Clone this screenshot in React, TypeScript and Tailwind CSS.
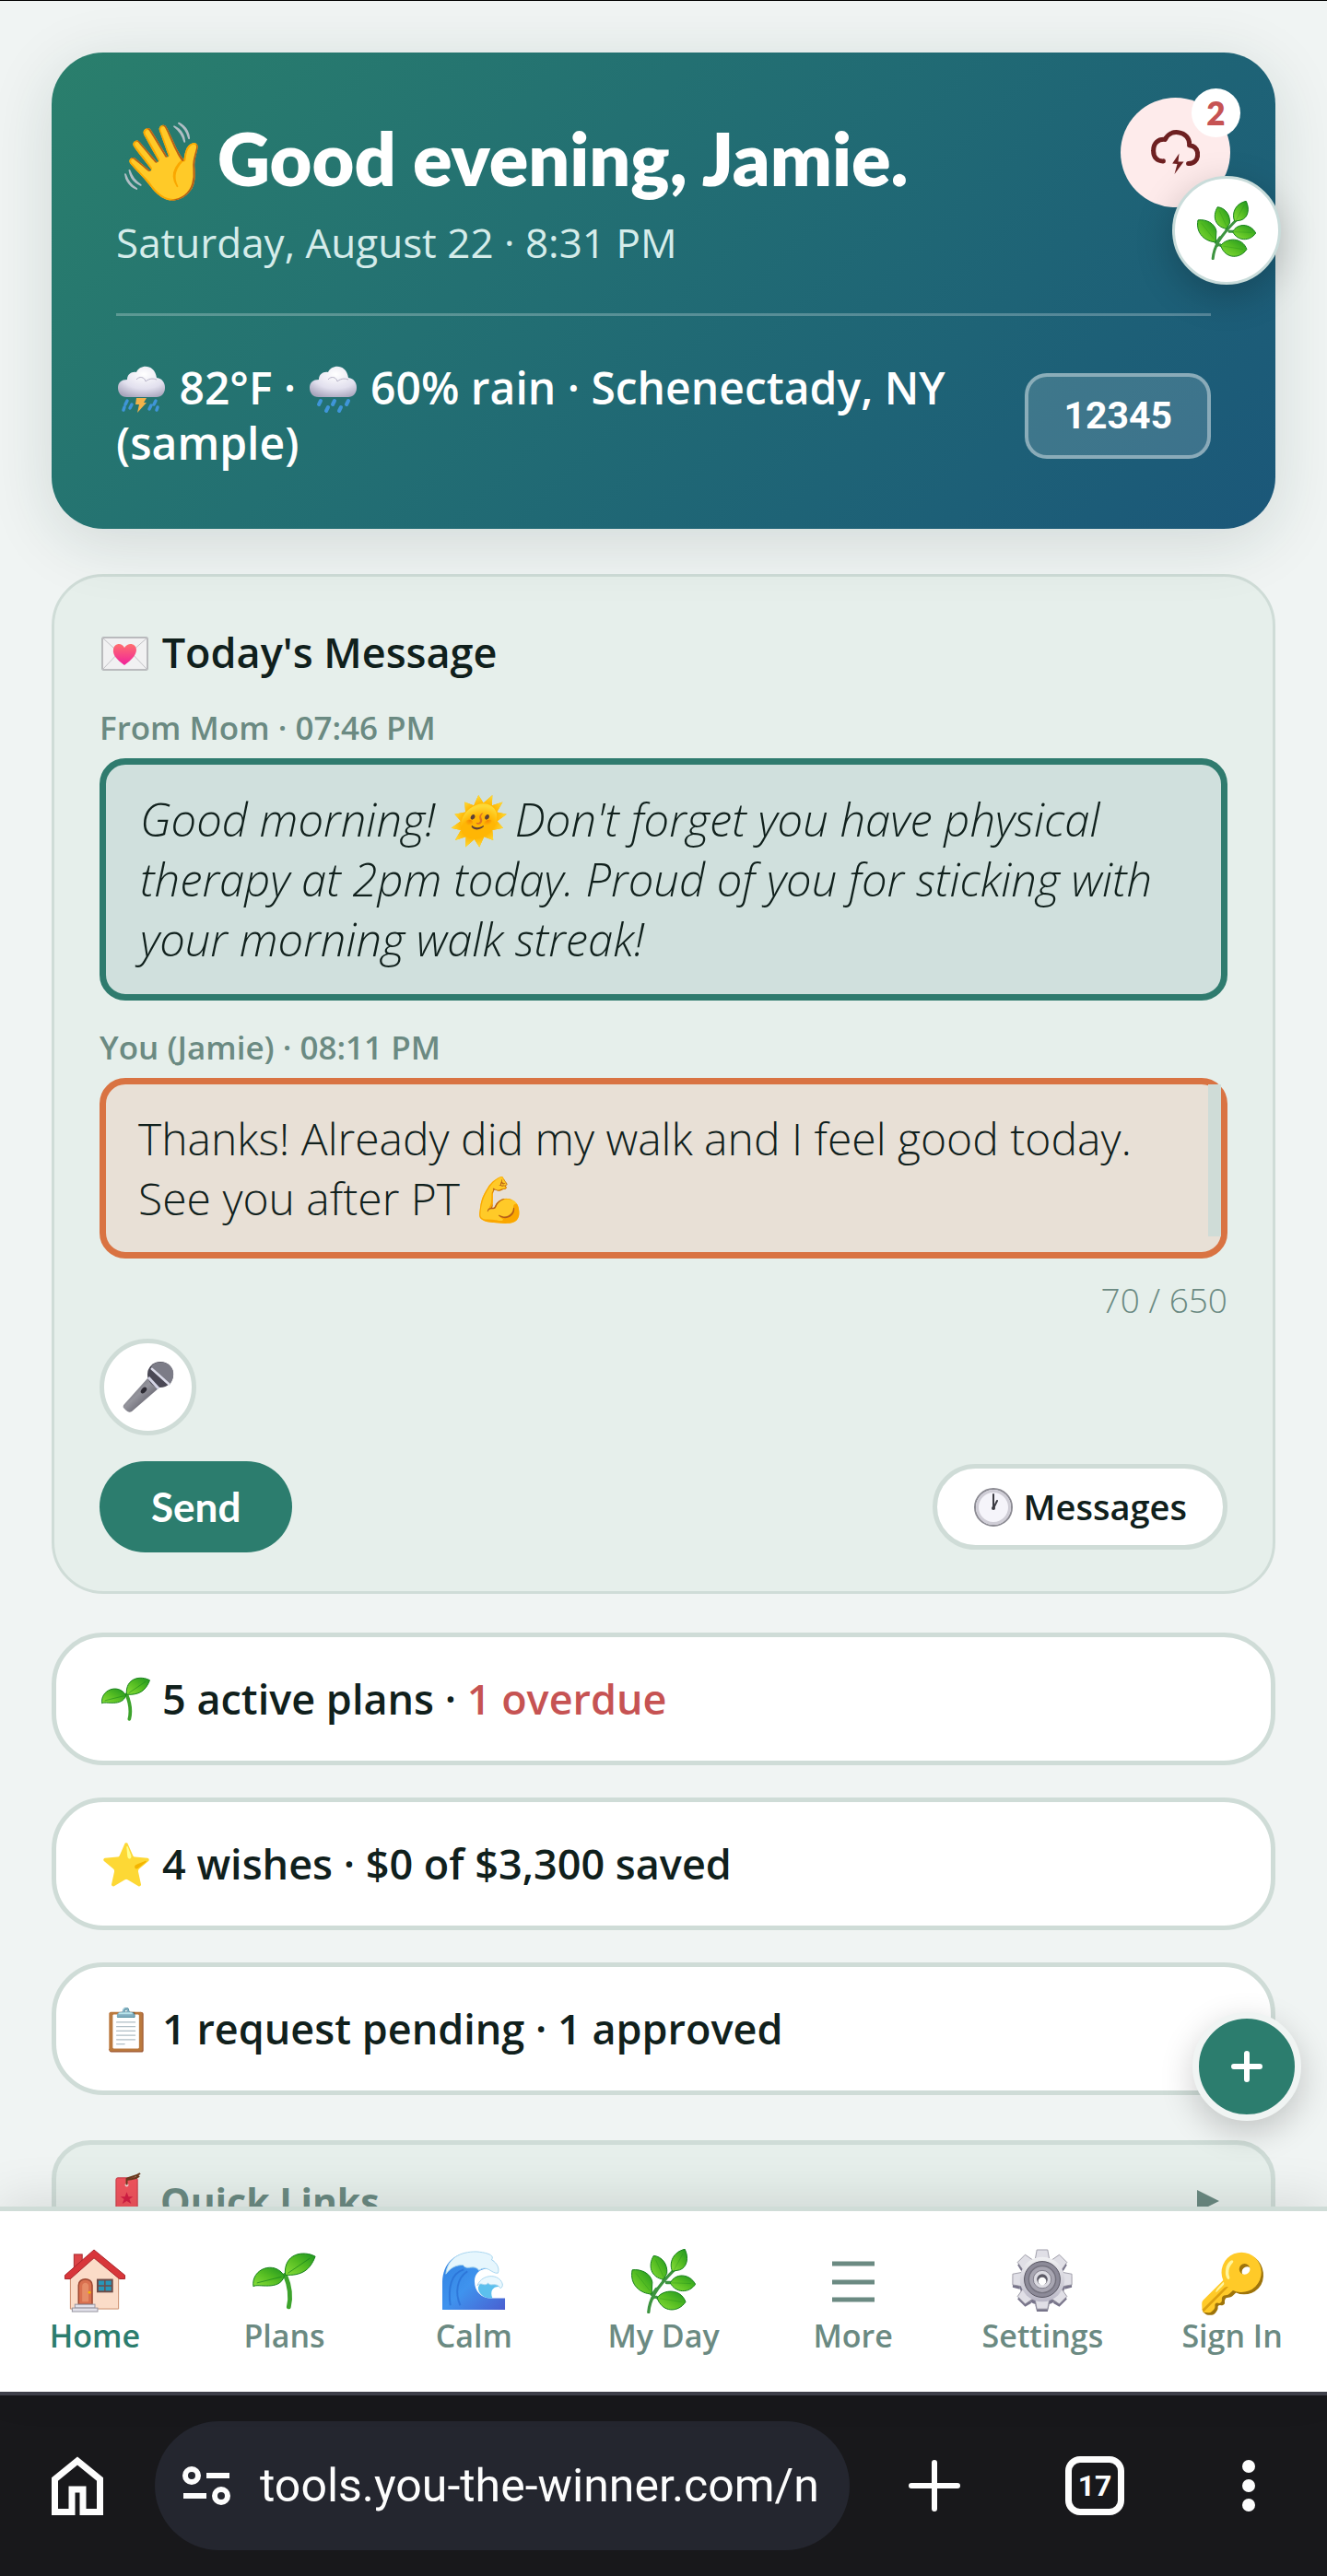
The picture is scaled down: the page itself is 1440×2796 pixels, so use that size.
import React, { useState } from 'react';

type IconProps = { className?: string };

function Leaf({ d }: { d: string }) {
  return <path d={d} fill="url(#leaf)" stroke="#15801b" strokeWidth="1" strokeLinejoin="round" vectorEffect="non-scaling-stroke" />;
}

// shared gradients, referenced by id from every icon
function Defs() {
  return (
    <svg className="absolute h-0 w-0" aria-hidden="true">
      <defs>
        <linearGradient id="leaf" x1="0" y1="1" x2="1" y2="0">
          <stop offset="0" stopColor="#8ade3a" />
          <stop offset="0.5" stopColor="#55bd22" />
          <stop offset="1" stopColor="#1d9420" />
        </linearGradient>
        <radialGradient id="cloud" cx="0.55" cy="0.25" r="0.8">
          <stop offset="0" stopColor="#ffffff" />
          <stop offset="0.6" stopColor="#e2e0ee" />
          <stop offset="1" stopColor="#a9a6bd" />
        </radialGradient>
        <linearGradient id="sea" x1="0" y1="0" x2="1" y2="1">
          <stop offset="0" stopColor="#2f7fe0" />
          <stop offset="0.5" stopColor="#3f93ee" />
          <stop offset="1" stopColor="#4a5fd0" />
        </linearGradient>
        <linearGradient id="metal" x1="0" y1="0" x2="0" y2="1">
          <stop offset="0" stopColor="#f1f1f3" />
          <stop offset="1" stopColor="#b9b7c6" />
        </linearGradient>
        <linearGradient id="mic" x1="0" y1="0" x2="1" y2="1">
          <stop offset="0" stopColor="#5c5c66" />
          <stop offset="0.45" stopColor="#94949c" />
          <stop offset="1" stopColor="#3c3948" />
        </linearGradient>
        <linearGradient id="heart" x1="0" y1="0" x2="0" y2="1">
          <stop offset="0" stopColor="#ff6f6f" />
          <stop offset="1" stopColor="#f0219b" />
        </linearGradient>
      </defs>
    </svg>
  );
}

function HerbIcon({ className }: IconProps) {
  return (
    <svg viewBox="0 0 190 190" className={className} aria-hidden="true">
      <path d="M51 186C54 150 70 118 128 60M60 134C64 132 70 124 74 118M97 88L94 96M115 99H104M77 144C72 140 66 142 62 146" fill="none" stroke="#3d9440" strokeWidth="9" strokeLinecap="round" />
      <Leaf d="M3 62C28 58 58 72 62 98L60 133C28 132-6 106 3 62Z" />
      <Leaf d="M66 20C90 22 108 45 105 72L95 90C58 84 48 50 66 20Z" />
      <Leaf d="M158 1C170 25 165 55 142 62L121 66C110 40 124 8 158 1Z" />
      <Leaf d="M115 100C130 70 172 72 189 104C170 132 130 130 115 100Z" />
      <Leaf d="M76 144C95 118 146 116 160 156C140 187 92 190 76 144Z" />
      <path d="M14 72L54 122M72 32L96 84M152 14L126 62M120 100L176 102M84 146L148 156" fill="none" stroke="#15801b" strokeWidth="2" opacity="0.4" />
    </svg>
  );
}

function SproutIcon({ className }: IconProps) {
  return (
    <svg viewBox="-1 -1 73 66" className={className} aria-hidden="true">
      <path d="M36 25C41 37 43 49 40 61" fill="none" stroke="#3da32c" strokeWidth="5" strokeLinecap="round" />
      <Leaf d="M70 4C57-3 34 0 36 25C54 26 64 20 70 4Z" />
      <Leaf d="M35 26C24 8-3 18 0 38C4 34 30 44 35 26Z" />
      <path d="M64 6L39 23M4 34L32 27" stroke="#15801b" strokeWidth="1" opacity="0.7" />
    </svg>
  );
}

function CloudIcon({ className, storm }: IconProps & { storm?: boolean }) {
  return (
    <svg viewBox="0 0 52 52" className={className} aria-hidden="true">
      <path d="M10 34C3 34 0 29 0 24C0 18 4 15 10 15C10 9 15 6 20 7C24-2 40-2 42 13C48 14 51 18 51 24C51 30 47 34 42 34Z" fill="url(#cloud)" />
      <path d="M20 15C23 11 29 12 30 17C35 13 39 14 42 15" fill="none" stroke="#b4b1c6" strokeWidth="1" />
      {storm ? (
        <>
          <path d="M20 35H31L28 40H31L21 51L23 42H19Z" fill="#f2b24a" />
          <path d="M10 38l-2 4M15 42l-2 4M7 45l-1 3M41 38l-2 4M36 43l-2 4M43 45l-1 3" stroke="#3f95d9" strokeWidth="3.5" strokeLinecap="round" />
        </>
      ) : (
        <path d="M12 38l-2 4M27 38l-2 4M42 38l-2 4M20 45l-2 4M34 45l-2 4" stroke="#3f95d9" strokeWidth="4" strokeLinecap="round" />
      )}
    </svg>
  );
}

function AlertCloudIcon({ className }: IconProps) {
  return (
    <svg viewBox="0 0 158 144" className={className} aria-hidden="true">
      <path d="M40 101C20 102 7 88 8 66C8 43 23 29 46 31C54 12 72 6 88 8C112 11 126 29 124 50C143 52 151 64 151 80C151 97 139 109 121 109" fill="none" stroke="#6e2021" strokeWidth="15" strokeLinecap="round" strokeLinejoin="round" />
      <path d="M91 76L69 109L85 110L76 143L106 103L88 103Z" fill="#6e2021" />
    </svg>
  );
}

function EnvelopeIcon({ className }: IconProps) {
  return (
    <svg viewBox="0 0 56 52" className={className} aria-hidden="true">
      <rect x="3" y="9" width="49" height="35" rx="1" fill="#f1f1f2" stroke="#a9a9ad" strokeWidth="1.500" />
      <path d="M3 44L22 24M52 44L33 24M3 9L27 31L52 9" fill="none" stroke="#c2c2c6" strokeWidth="1" />
      <path d="M27 39C19 33 14 28 15 22C16 15 24 14 27 20C31 14 39 15 40 22C40 28 35 33 27 39Z" fill="url(#heart)" />
    </svg>
  );
}

function MicIcon({ className }: IconProps) {
  return (
    <svg viewBox="0 0 56 56" className={className} aria-hidden="true">
      <path d="M28 17L40 28L10 54Q7 56 4 53L1 50Q0 48 2 46Z" fill="url(#mic)" />
      <circle cx="41" cy="14" r="14" fill="#4a4855" />
      <path d="M31 5C36-1 48-1 53 6C57 12 55 20 51 25Z" fill="#7c7c87" />
      <path d="M31 7L51 25" stroke="#dcdcea" strokeWidth="2.500" />
      <path d="M28 17L39 29" stroke="#d3d3e4" strokeWidth="3" />
      <ellipse cx="23" cy="31" rx="2.5" ry="4" transform="rotate(40 23 31)" fill="#2c2a33" />
    </svg>
  );
}

function ClockIcon({ className }: IconProps) {
  return (
    <svg viewBox="0 0 44 44" className={className} aria-hidden="true">
      <circle cx="22" cy="22" r="20" fill="#f5f4fa" stroke="#8b8a92" strokeWidth="2" />
      <circle cx="22" cy="22" r="17.500" fill="none" stroke="#cfcdd6" strokeWidth="3" />
      <path d="M22 23V8M22 23L26 15" stroke="#3b3b42" strokeWidth="2" strokeLinecap="round" />
      <circle cx="22" cy="23" r="2" fill="#3b3b42" />
    </svg>
  );
}

function BookmarkIcon({ className }: IconProps) {
  return (
    <svg viewBox="0 0 32 64" className={className} aria-hidden="true">
      <path d="M3 8Q3 6 5 6H25Q27 6 27 8V62L15 54L3 62Z" fill="#f0535d" stroke="#c43b45" strokeWidth="1" />
      <path d="M15 22l2 5h5l-4 3 2 5-5-3-5 3 2-5-4-3h5z" fill="#d41f45" />
      <circle cx="15" cy="14" r="2" fill="#f7d5d5" />
      <path d="M15 14V7C20 4 25 5 30 1M16 8C22 7 24 8 29 4" fill="none" stroke="#6b3a1e" strokeWidth="2" />
    </svg>
  );
}

function HouseIcon({ className }: IconProps) {
  return (
    <svg viewBox="-1 -2 70 71" className={className} aria-hidden="true">
      <rect x="11" y="4" width="9" height="20" fill="#dd4548" stroke="#a8292d" strokeWidth="1" />
      <path d="M7 30L33 6L60 30V64H7Z" fill="#fbdcc8" stroke="#c98a6a" strokeWidth="1" />
      <path d="M1 27L33-1L67 27V31H61L33 8L7 31H1Z" fill="#d8363a" stroke="#a8242a" strokeWidth="1" />
      <path d="M16 59V38C16 29 31 29 31 38V59Z" fill="#d9704f" stroke="#9c4630" strokeWidth="1.500" />
      <path d="M20 56V39C20 34 27 34 27 39V56Z" fill="#e68d68" />
      <circle cx="28" cy="46" r="1.500" fill="#f5b800" />
      <rect x="37" y="32" width="16" height="13" fill="#2796b8" stroke="#6f4b47" strokeWidth="2" />
      <path d="M45 32V45M37 38.500H53" stroke="#6f4b47" strokeWidth="1.500" />
      <rect x="12" y="59" width="22" height="4" fill="#e2e1ea" stroke="#96949f" strokeWidth="1" />
      <rect x="9" y="63" width="28" height="4" fill="#e2e1ea" stroke="#96949f" strokeWidth="1" />
    </svg>
  );
}

function WaveIcon({ className }: IconProps) {
  return (
    <svg viewBox="-1 -1 72 68" className={className} aria-hidden="true">
      <path d="M0 65V34C1 12 14 1 34 1C50 2 62 10 62 23C50 15 36 20 36 33C36 45 44 52 54 52H70V65Z" fill="url(#sea)" />
      <path d="M9 60C6 40 10 24 24 20M20 60C14 46 16 30 28 22" fill="none" stroke="#2468cf" strokeWidth="2" opacity="0.6" />
      <path d="M4 25C6 7 20 0 38 0C50 1 59 4 55 9C62 13 64 20 62 24C55 25 50 14 41 21C35 13 28 22 23 15C16 15 10 17 4 25Z" fill="#e6f6fd" stroke="#a8d6ee" strokeWidth="1" />
      <path d="M40 40C45 27 60 26 67 40C59 37 52 42 56 52C48 53 40 48 40 40Z" fill="#5cc0ee" />
      <path d="M39 38C43 27 58 24 65 32C68 36 68 39 65 41C60 33 54 40 51 35C47 40 44 33 39 38Z" fill="#eaf8fe" stroke="#a8d6ee" strokeWidth="1" />
    </svg>
  );
}

function GearIcon({ className }: IconProps) {
  const teeth = [0, 45, 90, 135, 180, 225, 270, 315];
  return (
    <svg viewBox="0 0 68 72" className={className} aria-hidden="true">
      <g fill="#77748a">
        {teeth.map((a) => <path key={a} d="M26 12L28 4H40L42 12Z" transform={`rotate(${a} 34 37)`} />)}
        <circle cx="34" cy="37" r="26" />
      </g>
      <g fill="url(#metal)" stroke="#8e8c99" strokeWidth="0.800">
        {teeth.map((a) => <path key={a} d="M26 12L28 1H40L42 12Z" transform={`rotate(${a} 34 34)`} fill="#e0dfe6" />)}
        <circle cx="34" cy="34" r="25" stroke="none" />
      </g>
      <circle cx="34" cy="34" r="20" fill="#8c8a98" stroke="#55535f" strokeWidth="1" />
      <circle cx="34" cy="34" r="15" fill="#a8a6b2" stroke="#75737f" strokeWidth="1.500" />
      <circle cx="34" cy="34" r="10" fill="#dcdbe2" stroke="#7f7d89" strokeWidth="1" />
      <circle cx="34" cy="34" r="6" fill="#5d5b67" />
      <circle cx="34" cy="36" r="4.500" fill="#ffffff" />
    </svg>
  );
}

function MenuIcon({ className }: IconProps) {
  return (
    <svg viewBox="0 0 70 70" className={className} aria-hidden="true">
      <path d="M12 16H58M12 36H58M12 55H58" stroke="#6b8a82" strokeWidth="5" />
    </svg>
  );
}

const navItems = [
  { label: 'Home', icon: <HouseIcon className="size-[70px]" />, active: true },
  { label: 'Plans', icon: <SproutIcon className="size-[70px]" /> },
  { label: 'Calm', icon: <WaveIcon className="size-[70px]" /> },
  { label: 'My Day', icon: <HerbIcon className="size-[70px]" /> },
  { label: 'More', icon: <MenuIcon className="size-[70px]" /> },
  { label: 'Settings', icon: <GearIcon className="size-[70px]" /> },
  { label: 'Sign In', icon: <span className="text-[62px] leading-[70px]">🔑</span> },
];

function Header() {
  return (
    <header className="relative rounded-[56px] bg-linear-135 from-[#2a7f6c] to-[#1b5779] px-[70px] py-[63px] text-white shadow-[0_14px_70px_rgba(20,60,50,0.14)]">
      <h1 className="flex items-center gap-2 font-[Lato,sans-serif] text-[79px] leading-[104px] font-extrabold">
        <span className="text-[82px]">👋</span>
        <span>Good evening, Jamie.</span>
      </h1>
      <p className="mt-[6px] text-[44px] leading-[66px] text-[#d5ecea]">Saturday, August 22 · 8:31 PM</p>
      <div className="mt-[44px] flex items-center justify-between gap-8 border-t-3 border-white/25 pt-12">
        <p className="text-[48px] leading-[60px] font-semibold">
          <CloudIcon storm className="mx-[2px] inline size-[52px] align-[-10px]" /> 82°F · <CloudIcon className="mx-[2px] inline size-[52px] align-[-10px]" /> 60% rain · Schenectady, NY (sample)
        </p>
        <button className="shrink-0 rounded-3xl border-4 border-white/40 bg-white/15 px-[38px] py-[18px] font-[Roboto,sans-serif] text-[41px] leading-[49px] font-bold">12345</button>
      </div>
      <button aria-label="Weather alerts" className="absolute top-[49px] right-[49px] flex size-[119px] items-center justify-center rounded-full bg-[#feebeb]">
        <AlertCloudIcon className="w-[53px]" />
        <span className="absolute -top-[10px] -right-[11px] flex size-[53px] items-center justify-center rounded-full bg-white font-[Lato,sans-serif] text-[35px] font-extrabold text-[#c65353]">2</span>
      </button>
    </header>
  );
}

function MessageCard() {
  const [reply, setReply] = useState('Thanks! Already did my walk and I feel good today. See you after PT 💪');

  return (
    <section className="mt-[49px] rounded-[56px] border-3 border-[#cfdcd7] bg-[#e6efeb] px-[49px] pt-[49px] pb-[42px]">
      <h2 className="text-[45px] leading-[66px] font-semibold">
        <EnvelopeIcon className="inline w-[56px] align-[-10px]" /> Today's Message
      </h2>
      <p className="mt-[21px] mb-[5px] text-[35px] leading-[56px] font-semibold text-[#6b8a82]">From Mom · 07:46 PM</p>
      <blockquote className="rounded-[28px] border-[7px] border-[#2f7b6e] bg-[#d0e0dd] px-[37px] py-[27px] text-[49px] leading-[65px] font-light italic">
        Good morning! 🌞 Don't forget you have physical therapy at 2pm today. Proud of you for sticking with your morning walk streak!
      </blockquote>
      <label htmlFor="reply" className="mt-[23px] mb-[5px] block text-[35px] leading-[56px] font-semibold text-[#6b8a82]">You (Jamie) · 08:11 PM</label>
      <div className="relative">
        <textarea
          id="reply"
          rows={2}
          value={reply}
          onChange={(e) => setReply(e.target.value)}
          className="block w-full resize-none overflow-hidden rounded-[28px] border-[7px] border-[#d97342] bg-[#e8e0d6] px-[35px] py-[26px] text-[48px] leading-[65px] font-light outline-none"
        />
        <span className="absolute top-[7px] right-[7px] bottom-[24px] w-[14px] bg-[#cfdcd7]" />
      </div>
      <p className="mt-[17px] text-right text-[37px] leading-[56px] font-light text-[#6b8a82]">70 / 650</p>
      <button aria-label="Record a voice message" className="mt-[14px] flex size-[105px] items-center justify-center rounded-full border-5 border-[#cfdcd7] bg-white">
        <MicIcon className="size-[56px]" />
      </button>
      <div className="mt-7 flex items-center justify-between">
        <button className="rounded-full bg-[#2c7d6e] px-[56px] py-[24px] font-[Lato,sans-serif] text-[44px] leading-[51px] font-bold text-white">Send</button>
        <button className="flex items-center gap-[11px] rounded-full border-5 border-[#cfdcd7] bg-white px-[39px] py-[16px] text-[38px] leading-[51px] font-semibold">
          <ClockIcon className="size-[44px]" />
          Messages
        </button>
      </div>
    </section>
  );
}

function SummaryRow({ icon, children }: { icon: React.ReactNode; children: React.ReactNode }) {
  return (
    <a href="#" className="flex items-center gap-[11px] rounded-[56px] border-5 border-[#cfdcd7] bg-white px-[48px] py-[34px] text-[45px] leading-[66px] font-semibold">
      <span className="flex w-[56px] justify-center">{icon}</span>
      <span>{children}</span>
    </a>
  );
}

function BrowserBar() {
  return (
    <footer className="flex items-center border-t-4 border-[#41424c] bg-[#18181b] py-7 pr-[77px] pl-[42px] text-[#fdfdfd]">
      <button aria-label="Home page" className="shrink-0">
        <svg viewBox="0 0 84 84" className="size-[84px]">
          <path d="M17.500 35V70.500H36V46H48V70.500H66.500V35L42 15Z" fill="none" stroke="currentColor" strokeWidth="7" />
        </svg>
      </button>
      <div className="ml-[42px] flex h-[140px] min-w-0 flex-1 items-center gap-[32px] rounded-full bg-[#24262f] pr-[29px] pl-[30px]">
        <svg viewBox="0 0 52 44" className="w-[52px] shrink-0">
          <g fill="none" stroke="currentColor" strokeWidth="6">
            <circle cx="10" cy="11" r="7" />
            <path d="M26 11H51M1 33H26" />
            <circle cx="42" cy="33" r="7" />
          </g>
        </svg>
        <input aria-label="Address" readOnly value="tools.you-the-winner.com/n" className="w-full min-w-0 bg-transparent font-[Roboto,sans-serif] text-[50px] leading-[60px] outline-none" />
      </div>
      <div className="flex shrink-0 items-center gap-[93px] pl-[49px]">
        <button aria-label="New tab" className="pl-[14px]">
          <svg viewBox="0 0 58 58" className="size-[58px]">
            <path d="M29 4V54M4 29H54" stroke="currentColor" strokeWidth="6" strokeLinecap="round" />
          </svg>
        </button>
        <button aria-label="Tabs" className="ml-5 flex size-[64px] items-center justify-center rounded-[16px] border-[7px] border-current font-[Roboto,sans-serif] text-[32px] font-bold">17</button>
        <button aria-label="Menu" className="ml-[34px]">
          <svg viewBox="0 0 16 58" className="h-[58px] w-[16px]" fill="currentColor">
            <circle cx="8" cy="8" r="7" />
            <circle cx="8" cy="29" r="7" />
            <circle cx="8" cy="50" r="7" />
          </svg>
        </button>
      </div>
    </footer>
  );
}

export default function App() {
  return (
    <div className="relative flex h-screen flex-col overflow-hidden border-t border-black bg-[#f0f4f3] font-['Open_Sans',sans-serif] text-[#10201c]">
      <Defs />
      <main className="relative min-h-0 flex-1 overflow-hidden px-14 pt-14">
        <Header />
        <MessageCard />

        <div className="mt-[42px] flex flex-col gap-[35px]">
          <SummaryRow icon={<SproutIcon className="w-[54px]" />}>
            5 active plans · <span className="text-[#c65353]">1 overdue</span>
          </SummaryRow>
          <SummaryRow icon="⭐">4 wishes · $0 of $3,300 saved</SummaryRow>
          <SummaryRow icon="📋">1 request pending · 1 approved</SummaryRow>
        </div>

        <details className="mt-[49px] rounded-[42px] border-5 border-[#cfdcd7] bg-[#e6efeb]">
          <summary className="flex list-none items-center px-[48px] py-7 text-[41px] leading-[66px] font-bold text-[#6b8a82]">
            <BookmarkIcon className="mr-[20px] ml-[14px] h-[62px] w-[31px]" />
            Quick Links
            <svg viewBox="0 0 24 24" className="mr-[8px] ml-auto size-[24px]" aria-hidden="true">
              <path d="M0 0L24 12L0 24Z" fill="#6b8a82" />
            </svg>
          </summary>
        </details>

        <button aria-label="Open garden" className="absolute top-[190px] right-[50px] flex size-[118px] items-center justify-center rounded-full border-3 border-[#c9dcda] bg-white shadow-[0_12px_40px_rgba(0,0,0,0.22)]">
          <HerbIcon className="size-[64px]" />
        </button>
        <button aria-label="Add" className="absolute right-[28px] bottom-[93px] flex size-[118px] items-center justify-center rounded-full border-[7px] border-[#f0f4f3] bg-[#2c7d6e] shadow-[0_12px_36px_rgba(0,0,0,0.2)]">
          <svg viewBox="0 0 34 34" className="size-[34px]">
            <path d="M17 3V31M3 17H31" stroke="#fff" strokeWidth="6" strokeLinecap="round" />
          </svg>
        </button>
      </main>

      <nav className="relative grid grid-cols-7 border-t-5 border-[#cfdcd7] bg-white pt-[41px] pb-[38px] shadow-[0_-8px_50px_rgba(0,0,0,0.1)]">
        {navItems.map((item) => (
          <a key={item.label} href="#" className={`flex flex-col items-center gap-[1px] text-[34px] leading-[46px] font-semibold whitespace-nowrap ${item.active ? 'text-[#2c7d6e]' : 'text-[#6b8a82]'}`}>
            {item.icon}
            {item.label}
          </a>
        ))}
      </nav>

      <BrowserBar />
    </div>
  );
}
